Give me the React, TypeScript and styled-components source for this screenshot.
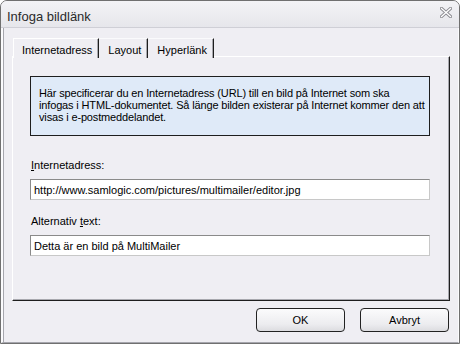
import React from "react";
import styled, { createGlobalStyle } from "styled-components";

const Global = createGlobalStyle`
  html, body { margin: 0; padding: 0; background: #ffffff; }
  body { font-family: "Liberation Sans", Arial, sans-serif; font-size: 11px; color: #000; }
  * { box-sizing: border-box; }
`;

const Window = styled.div`
  width: 460px;
  height: 344px;
  border: 1px solid #707070;
  border-radius: 7px 7px 0 0;
  background: #efeef3;
  display: flex;
  flex-direction: column;
  overflow: hidden;
`;

const TitleBar = styled.div`
  height: 27px;
  flex: none;
  display: flex;
  align-items: center;
  justify-content: space-between;
  padding: 0 7px 0 6px;
  background: linear-gradient(#f3f3f6, #e6e6eb);
  border-bottom: 1px solid #cfcfd6;
`;

const Title = styled.span`
  font-size: 13px;
  color: #2a2a2a;
  padding-top: 4px;
`;

const CloseIcon = styled.svg`
  width: 12px;
  height: 11px;
  margin-top: -3px;
`;

const Client = styled.div`
  flex: 1;
  display: flex;
  flex-direction: column;
  padding: 10px 9px 0 9px;
  border-left: 2px solid #fbfbfd;
  border-right: 1px solid #fbfbfd;
  border-bottom: 1px solid #a6a6ad;
  box-shadow: inset 1px 0 0 #a6a6ad;
`;

const TabStrip = styled.div`
  display: flex;
  height: 20px;
  margin-left: 1px;
  position: relative;
  z-index: 1;
  margin-bottom: -2px;
`;

const Tab = styled.div<{ $active?: boolean }>`
  height: 20px;
  display: flex;
  align-items: center;
  padding: 2px 6px 0 8px;
  background: #efeef3;
  border-top: 1px solid ${(p) => (p.$active ? "#ffffff" : "#fafafc")};
  border-left: 1px solid ${(p) => (p.$active ? "#ffffff" : "transparent")};
  border-right: 1px solid #1e1e1e;
  box-shadow: inset -1px 0 0 #a8a8ae;
  white-space: nowrap;
`;

const Panel = styled.div`
  width: 438px;
  height: 245px;
  display: flex;
  flex-direction: column;
  padding: 19px 19px 0 17px;
  border-top: 1px solid #ffffff;
  border-left: 1px solid #ffffff;
  border-right: 1px solid #1e1e1e;
  border-bottom: 1px solid #1e1e1e;
  box-shadow: inset -1px -1px 0 #a8a8ae;
`;

const InfoBox = styled.div`
  width: 400px;
  height: 60px;
  border: 1px solid #1e1e1e;
  background: #dfeaf8;
  padding: 10px 0 0 8px;
  line-height: 12px;
  letter-spacing: -0.15px;
  white-space: nowrap;
`;

const Label = styled.div<{ $gap?: number }>`
  margin-top: ${(p) => p.$gap ?? 23}px;
  height: 13px;
  line-height: 13px;
  padding-left: 1px;
`;

const U = styled.span`
  text-decoration: underline;
`;

const Input = styled.div`
  margin-top: 7px;
  width: 400px;
  height: 21px;
  border: 1px solid #8a8a8a;
  border-right-color: #c8c8c8;
  border-bottom-color: #c8c8c8;
  background: #ffffff;
  display: flex;
  align-items: center;
  padding: 1px 0 0 3px;
  white-space: nowrap;
`;

const Footer = styled.div`
  display: flex;
  justify-content: flex-end;
  gap: 15px;
  padding-top: 7px;
`;

const Button = styled.div`
  width: 89px;
  height: 24px;
  border: 1px solid #222222;
  border-radius: 4px;
  background: linear-gradient(#fbfbfc, #ececef 70%, #dcdce0);
  display: flex;
  align-items: center;
  justify-content: center;
  font-size: 11px;
`;

export default function App() {
  return (
    <>
      <Global />
      <Window>
        <TitleBar>
          <Title>Infoga bildlänk</Title>
          <CloseIcon viewBox="0 0 12 11">
            <path d="M1.5 1.5 L10.5 9.5 M10.5 1.5 L1.5 9.5" stroke="#8a8a90" strokeWidth="3.2" strokeLinecap="square" />
            <path d="M1.5 1.5 L10.5 9.5 M10.5 1.5 L1.5 9.5" stroke="#ffffff" strokeWidth="1.3" strokeLinecap="square" />
          </CloseIcon>
        </TitleBar>
        <Client>
          <TabStrip>
            <Tab $active>Internetadress</Tab>
            <Tab>Layout</Tab>
            <Tab>Hyperlänk</Tab>
          </TabStrip>
          <Panel>
            <InfoBox>
              Här specificerar du en Internetadress (URL) till en bild på Internet som ska
              <br />
              infogas i HTML-dokumentet. Så länge bilden existerar på Internet kommer den att
              <br />
              visas i e-postmeddelandet.
            </InfoBox>
            <Label>
              <U>I</U>nternetadress:
            </Label>
            <Input>http://www.samlogic.com/pictures/multimailer/editor.jpg</Input>
            <Label $gap={15}>
              Alternativ <U>t</U>ext:
            </Label>
            <Input>Detta är en bild på MultiMailer</Input>
          </Panel>
          <Footer>
            <Button>OK</Button>
            <Button>Avbryt</Button>
          </Footer>
        </Client>
      </Window>
    </>
  );
}
